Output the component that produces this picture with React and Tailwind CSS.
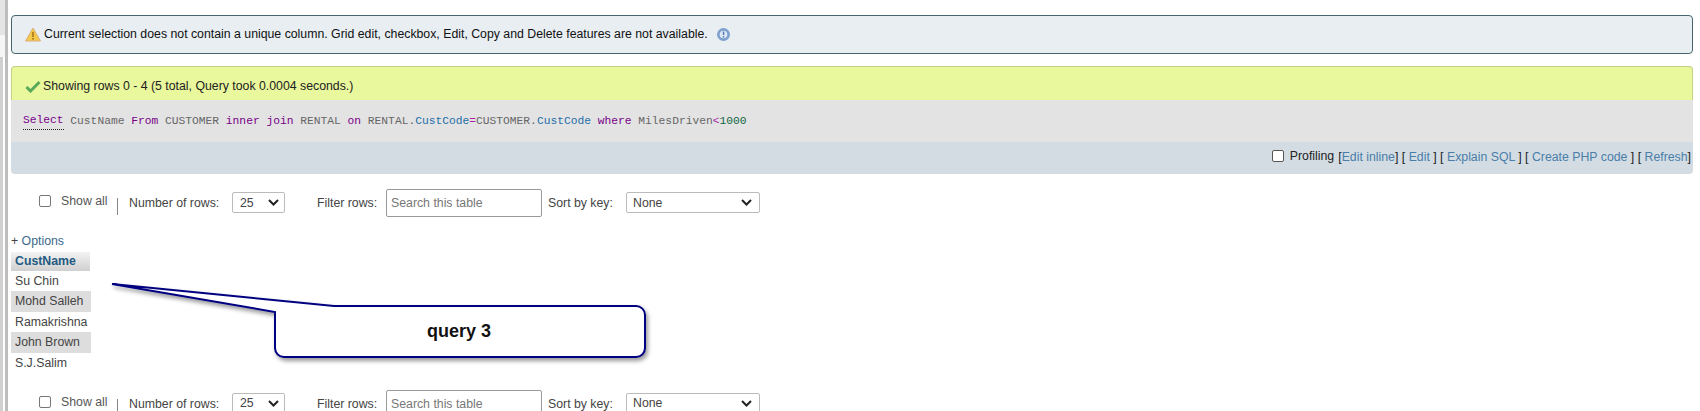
function Chevron() {
  return (
    <svg width="11" height="7" viewBox="0 0 11 7" fill="none" stroke="#222" strokeWidth="2">
      <path d="M1 1l4.500 4.500L10 1" />
    </svg>
  );
}

function Bar() {
  return (
    <div className="flex items-start h-[28px] text-[12.300px] leading-[14px] text-[#444]">
      <div className="ml-[28px] mt-[6px] w-[12px] h-[12px] border border-[#777] rounded-[2px] bg-white" />
      <span className="ml-[10px] mt-[5px] w-[46px] whitespace-nowrap text-[#555]">Show all</span>
      <div className="ml-[10px] mt-[9px] w-px h-[17px] bg-[#888]" />
      <span className="ml-[11px] mt-[7px] w-[89px] whitespace-nowrap">Number of rows:</span>
      <div className="ml-[14px] mt-[3px] w-[53px] h-[21px] border border-[#bbb] rounded-[2px] flex items-center justify-between pl-[7px] pr-[5px]">
        <span>25</span>
        <Chevron />
      </div>
      <span className="ml-[32px] mt-[7px] w-[59px] whitespace-nowrap">Filter rows:</span>
      <div className="ml-[10px] w-[156px] h-[28px] border border-[#999] rounded-[2px] pl-[4px] pt-[6px] text-[#777]">Search this table</div>
      <span className="ml-[6px] mt-[7px] w-[64px] whitespace-nowrap">Sort by key:</span>
      <div className="ml-[14px] mt-[3px] w-[134px] h-[21px] border border-[#bbb] rounded-[2px] flex items-center justify-between pl-[6px] pr-[7px]">
        <span>None</span>
        <Chevron />
      </div>
    </div>
  );
}

function Row({ name, shaded }) {
  return (
    <div className={`h-[20.400px] pl-[4px] flex items-center text-[12.300px] text-[#444] ${shaded ? "bg-[#ddd]" : ""}`}>{name}</div>
  );
}

export default function App() {
  return (
    <div className="relative w-[1700px] h-[411px] overflow-hidden bg-white font-['Liberation_Sans',Arial,sans-serif] flex">
      <div className="w-[5px] shrink-0 flex flex-col">
        <div className="h-[35px] bg-[#e4e4e4]" />
        <div className="h-[22px] bg-[#f6f6f6]" />
        <div className="flex-1 bg-[#d0d0d0] mr-[2px]" />
      </div>
      <div className="w-[3px] shrink-0 bg-[#bdbdbd]" />
      <div className="flex-1 min-w-0 pl-[3px] pr-[7px] pt-[15px]">
        <div className="h-[39px] border border-[#46666e] rounded-[4px] bg-[#e8eef1] flex items-center pl-[13px] text-[12.300px] text-[#111]">
          <svg width="16" height="15" viewBox="0 0 16 15">
            <path d="M8 1L15.500 14H.5z" fill="#f3c94c" stroke="#dcae78" />
            <rect x="7.200" y="5" width="1.600" height="5" fill="#a8741c" />
            <rect x="7.200" y="11" width="1.600" height="1.600" fill="#a8741c" />
          </svg>
          <span className="ml-[3px]">Current selection does not contain a unique column. Grid edit, checkbox, Edit, Copy and Delete features are not available.</span>
          <svg className="ml-[9px]" width="13" height="13" viewBox="0 0 13 13">
            <circle cx="6.500" cy="6.500" r="6.500" fill="#7f9fcf" />
            <circle cx="6.500" cy="6.500" r="3.800" fill="#dfe9f5" />
            <rect x="5.800" y="3.500" width="1.500" height="3.500" fill="#5578ae" />
            <rect x="5.800" y="8" width="1.500" height="1.500" fill="#5578ae" />
          </svg>
        </div>
        <div className="mt-[12px] h-[34px] border border-b-0 border-[#c5cf85] rounded-t-[4px] bg-[#e9f79d] flex items-center pl-[13px] pt-[6px] text-[12.300px] text-[#222]">
          <svg width="16" height="13" viewBox="0 0 16 13" fill="none" stroke="#5aa85a" strokeWidth="3">
            <path d="M1.500 7l4 4L14.500 2" />
          </svg>
          <span className="ml-[2px]">Showing rows 0 - 4 (5 total, Query took 0.0004 seconds.)</span>
        </div>
        <div className="h-[42px] bg-[#e3e3e3] flex items-center pl-[12px] font-['Liberation_Mono',monospace] text-[11.270px] text-[#666]">
          <span className="text-[#770088] border-b border-dotted border-[#222]">Select</span>
          <span className="whitespace-pre"> CustName <span className="text-[#770088]">From</span> CUSTOMER <span className="text-[#770088]">inner join</span> RENTAL <span className="text-[#770088]">on</span> RENTAL.<span className="text-[#1f6fa8]">CustCode</span><span className="text-[#aa22aa]">=</span>CUSTOMER.<span className="text-[#1f6fa8]">CustCode</span> <span className="text-[#770088]">where</span> MilesDriven<span className="text-[#aa22aa]">&lt;</span><span className="text-[#116644]">1000</span></span>
        </div>
        <div className="h-[32px] bg-[#d3dce3] rounded-b-[4px] flex justify-end items-start pt-[7px] pr-[2px] text-[12.300px] leading-[14px] text-[#222]">
          <div className="mt-[1px] w-[12px] h-[12px] border border-[#555] rounded-[2px] bg-white" />
          <span className="ml-[6px]">Profiling</span>
          <span className="ml-[4px] mt-[1px] whitespace-pre">[<a className="text-[#4a7ea8]">Edit inline</a>] [ <a className="text-[#4a7ea8]">Edit</a> ] [ <a className="text-[#4a7ea8]">Explain SQL</a> ] [ <a className="text-[#4a7ea8]">Create PHP code</a> ] [ <a className="text-[#4a7ea8]">Refresh</a>]</span>
        </div>
        <div className="mt-[15px]"><Bar /></div>
        <div className="mt-[17px] text-[12.300px] leading-[14px] text-[#3a6a8c]"><span className="text-[#444]">+</span> Options</div>
        <div className="mt-[4px] w-[80px]">
          <div className="w-[79px] h-[19px] pl-[4px] flex items-center text-[12.300px] font-bold text-[#235a81] bg-gradient-to-b from-[#f3f3f3] to-[#d0d0d0]">CustName</div>
          <Row name="Su Chin" />
          <Row name="Mohd Salleh" shaded />
          <Row name="Ramakrishna" />
          <Row name="John Brown" shaded />
          <Row name="S.J.Salim" />
        </div>
        <div className="mt-[17px]"><Bar /></div>
      </div>
      <div className="absolute left-[105px] top-[278px] w-[560px] h-[95px]">
        <svg width="560" height="95" viewBox="0 0 560 95" className="absolute inset-0">
          <defs>
            <filter id="callout-shadow" x="-5%" y="-20%" width="115%" height="150%">
              <feDropShadow dx="2" dy="3" stdDeviation="2" floodColor="#000" floodOpacity="0.4" />
            </filter>
          </defs>
          <path
            d="M7 6L229 28H531a9 9 0 0 1 9 9V70a9 9 0 0 1-9 9H179a9 9 0 0 1-9-9V34Z"
            fill="#fff"
            stroke="#000080"
            strokeWidth="2"
            filter="url(#callout-shadow)"
          />
        </svg>
        <div className="absolute left-[170px] top-[28px] w-[368px] h-[51px] flex items-center justify-center text-[18px] font-bold text-[#111]">query 3</div>
      </div>
    </div>
  );
}
